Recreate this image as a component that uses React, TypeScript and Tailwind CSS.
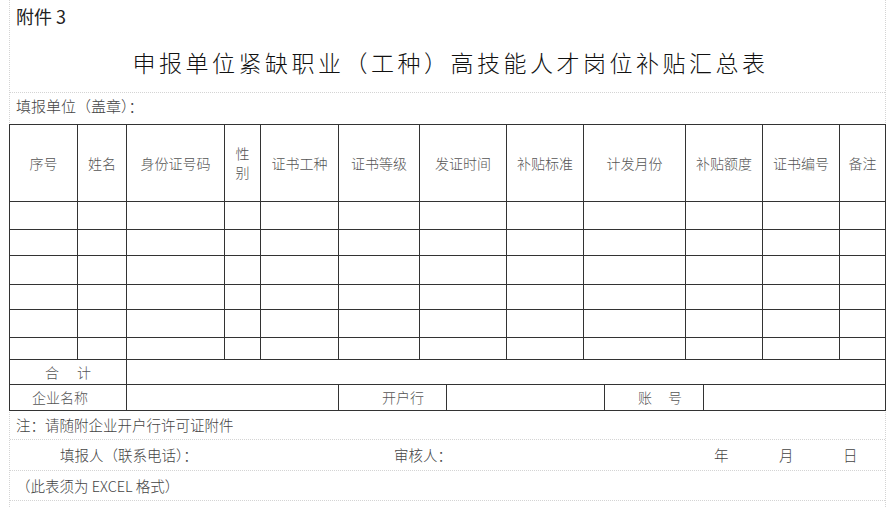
import React from "react"

const cols = "grid-cols-[68px_49px_98px_36px_78px_81px_87px_77px_102px_77px_77px_46px]"
const heads = ["序号", "姓名", "身份证号码", "性别", "证书工种", "证书等级", "发证时间", "补贴标准", "计发月份", "补贴额度", "证书编号", "备注"]
const rowHeights = ["h-[28px]", "h-[26px]", "h-[29px]", "h-[25px]", "h-[28px]", "h-[22px]"]

const cell = "border-r border-b border-[#333]"

export default function App() {
  return (
    <div
      className="w-[890px] h-[507px] bg-white overflow-hidden"
      style={{ fontFamily: '"Noto Sans CJK SC", "Noto Sans", sans-serif' }}
    >
      <div className="ml-[9px] w-[877px] h-[507px] border-x border-dotted border-[#d4d4d4]">
        {/* 标题区 */}
        <div className="border-b border-dotted border-[#d4d4d4]">
          <div className="h-[34px] pl-[6px] pt-[4px] text-[18px] leading-[24px] text-[#222]">附件 3</div>
          <div className="h-[58px] flex items-center justify-center pl-[6px] pb-[2px] text-[23px] tracking-[3.5px] text-[#111] font-light">
            申报单位紧缺职业（工种）高技能人才岗位补贴汇总表
          </div>
        </div>
        <div className="h-[31px] flex items-center pl-[6px] pb-[4px] text-[15px] text-[#444] font-light">
          填报单位（盖章）：
        </div>

        {/* 主表 */}
        <div className="-ml-px w-[877px] border-l border-t border-[#333] text-[14px] text-[#555] font-light">
          <div className={`grid ${cols} h-[77px]`}>
            {heads.map((h) => (
              <div key={h} className={`${cell} flex items-center justify-center text-center`}>
                {h === "性别" ? (
                  <span className="leading-[19px]">性<br />别</span>
                ) : (
                  h
                )}
              </div>
            ))}
          </div>
          {rowHeights.map((rh, i) => (
            <div key={i} className={`grid ${cols} ${rh}`}>
              {heads.map((h) => (
                <div key={h} className={cell} />
              ))}
            </div>
          ))}
          <div className="grid grid-cols-[117px_759px] h-[25px]">
            <div className={`${cell} flex items-center justify-center gap-[18px]`}>
              <span>合</span>
              <span>计</span>
            </div>
            <div className={cell} />
          </div>
          <div className="grid grid-cols-[117px_212px_108px_158px_99px_182px] h-[26px]">
            <div className={`${cell} flex items-center justify-center pr-[16px]`}>企业名称</div>
            <div className={cell} />
            <div className={`${cell} flex items-center justify-end pr-[22px]`}>开户行</div>
            <div className={cell} />
            <div className={`${cell} flex items-center justify-center gap-[16px] pl-[12px]`}>
              <span>账</span>
              <span>号</span>
            </div>
            <div className={cell} />
          </div>
        </div>

        {/* 说明区 */}
        <div className="text-[14.5px] text-[#444] font-light">
          <div className="h-[29px] flex items-center pl-[6px] border-b border-dotted border-[#d4d4d4]">
            注：请随附企业开户行许可证附件
          </div>
          <div className="h-[31px] flex items-center border-b border-dotted border-[#d4d4d4]">
            <span className="w-[384px] pl-[50px]">填报人（联系电话）：</span>
            <span className="w-[320px]">审核人：</span>
            <span className="w-[65px]">年</span>
            <span className="w-[64px]">月</span>
            <span>日</span>
          </div>
          <div className="h-[30px] flex items-center pl-[6px] border-b border-dotted border-[#d4d4d4]">
            （此表须为 EXCEL 格式）
          </div>
        </div>
      </div>
    </div>
  )
}
